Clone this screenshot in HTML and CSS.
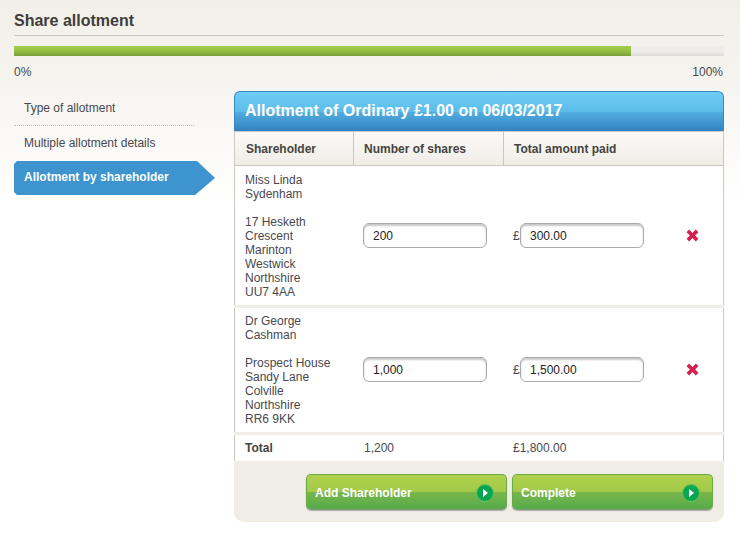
FILE: index.html
```html
<!DOCTYPE html>
<html lang="en">
<head>
<meta charset="utf-8">
<title>Share allotment</title>
<link rel="stylesheet" href="styles.css">
</head>
<body>
<header class="page-head">
  <h1>Share allotment</h1>
</header>
<div class="progress"><div class="progress-fill"></div></div>
<div class="progress-labels"><span>0%</span><span>100%</span></div>
<div class="layout">
  <nav class="steps">
    <a class="step step-dotted">Type of allotment</a>
    <a class="step step-plain">Multiple allotment details</a>
    <a class="step step-active">Allotment by shareholder</a>
  </nav>
  <main class="panel">
    <h2 class="panel-title">Allotment of Ordinary £1.00 on 06/03/2017</h2>
    <div class="head-row">
      <div class="hc hc-name">Shareholder</div>
      <div class="hc hc-shares">Number of shares</div>
      <div class="hc hc-paid">Total amount paid</div>
    </div>
    <div class="rows">
      <div class="row">
        <div class="who">Miss Linda<br>Sydenham<br><br>17 Hesketh<br>Crescent<br>Marinton<br>Westwick<br>Northshire<br>UU7 4AA</div>
        <div class="cell-shares"><input class="field" type="text" value="200"></div>
        <div class="cell-paid"><span class="pound">£</span><input class="field" type="text" value="300.00"></div>
        <div class="cell-del"><svg class="del" viewBox="0 0 14 14" width="13" height="13"><path d="M.6 3.400 3.400 .6 7 4.200 10.600 .6 13.400 3.400 9.800 7 13.400 10.600 10.600 13.400 7 9.800 3.400 13.400 .6 10.600 4.200 7Z"/></svg></div>
      </div>
      <div class="row row-2">
        <div class="who">Dr George<br>Cashman<br><br>Prospect House<br>Sandy Lane<br>Colville<br>Northshire<br>RR6 9KK</div>
        <div class="cell-shares"><input class="field" type="text" value="1,000"></div>
        <div class="cell-paid"><span class="pound">£</span><input class="field" type="text" value="1,500.00"></div>
        <div class="cell-del"><svg class="del" viewBox="0 0 14 14" width="13" height="13"><path d="M.6 3.400 3.400 .6 7 4.200 10.600 .6 13.400 3.400 9.800 7 13.400 10.600 10.600 13.400 7 9.800 3.400 13.400 .6 10.600 4.200 7Z"/></svg></div>
      </div>
      <div class="total-row">
        <div class="total-label">Total</div>
        <div class="total-shares">1,200</div>
        <div class="total-paid">£1,800.00</div>
      </div>
    </div>
    <div class="actions">
      <a class="btn">Add Shareholder<svg class="go" viewBox="0 0 18 18" width="18" height="18"><circle cx="9" cy="9" r="8.500"/><path d="M7 5 12 9 7 13Z"/></svg></a>
      <a class="btn">Complete<svg class="go" viewBox="0 0 18 18" width="18" height="18"><circle cx="9" cy="9" r="8.500"/><path d="M7 5 12 9 7 13Z"/></svg></a>
    </div>
  </main>
</div>
</body>
</html>
```
FILE: styles.css
```css
* { box-sizing: border-box; }
html, body { margin: 0; height: 100%; }
body {
  width: 740px;
  height: 554px;
  overflow: hidden;
  padding: 0 16px 0 14px;
  background: linear-gradient(#f2efe8 0, #f5f3ee 70px, #fff 205px);
  font: 12px/14px "Liberation Sans", Arial, sans-serif;
  color: #48484f;
}
.page-head { height: 36px; border-bottom: 1px solid #cbc8c1; padding-top: 12px; }
h1 { margin: 0; font-size: 16px; line-height: 18px; font-weight: bold; color: #3f3d3a; }
.progress { height: 10px; margin-top: 10px; background: linear-gradient(#efedea 0, #efedea 50%, #dfddd8 100%); }
.progress-fill { width: 617px; height: 10px; background: linear-gradient(#a2cf4c 0, #9ac646 35%, #7ba13b 100%); }
.progress-labels { display: flex; justify-content: space-between; margin-top: 9px; padding-right: 1px; height: 14px; }
.layout { display: flex; margin-top: 12px; align-items: flex-start; }
.steps { width: 220px; flex: none; display: flex; flex-direction: column; }
.step { display: block; width: 180px; padding: 0 10px; }
.step-dotted { height: 35px; padding-top: 10px; border-bottom: 1px dotted #c4c2bc; }
.step-plain { height: 35px; padding-top: 10px; }
.step-active {
  width: 201px;
  height: 34px;
  padding-top: 9px;
  background: #3d94cf;
  color: #fff;
  font-weight: bold;
  clip-path: polygon(0 3px, 3px 0, 183px 0, 201px 17px, 181px 34px, 3px 34px, 0 31px);
}
.panel { width: 490px; flex: none; }
.panel-title {
  margin: 0;
  height: 40px;
  padding: 9px 10px 0;
  border: 1px solid #3a86c2;
  border-bottom: 0;
  border-radius: 6px 6px 0 0;
  background: linear-gradient(#6fcdf7 0, #5cbdea 50%, #52aee0 50%, #3283c2 100%);
  color: #fff;
  font-size: 16px;
  line-height: 20px;
  font-weight: bold;
}
.head-row {
  display: flex;
  height: 35px;
  border: 1px solid #cbc8c1;
  background: linear-gradient(#fbfaf8, #f0ede7);
  font-weight: bold;
  color: #46443f;
}
.hc { padding-top: 10px; padding-left: 11px; }
.hc-name { width: 119px; border-right: 1px solid #cbc8c1; }
.hc-shares { width: 150px; padding-left: 10px; border-right: 1px solid #cbc8c1; }
.hc-paid { padding-left: 10px; }
.rows { display: flex; flex-direction: column; background: #f0ede6; }
.row {
  display: flex;
  align-items: center;
  height: 139px;
  border-left: 1px solid #cbc8c1;
  border-right: 1px solid #cbc8c1;
  background: #fff;
}
.row-2 { height: 124px; margin-top: 3px; }
.row-2 .cell-shares, .row-2 .cell-paid, .row-2 .cell-del { margin-bottom: 1px; }
.who { width: 119px; flex: none; padding-left: 10px; }
.cell-shares { width: 150px; flex: none; padding-left: 9px; }
.cell-paid { width: 167px; flex: none; display: flex; align-items: center; padding-left: 9px; }
.pound { width: 7px; }
.cell-del { display: flex; align-items: center; padding-left: 15px; padding-bottom: 1px; }
.del { fill: #d4204f; display: block; }
.field {
  display: block;
  width: 124px;
  height: 25px;
  margin: 0;
  padding: 1px 9px 0;
  border: 1px solid #aaa;
  border-radius: 6px;
  box-shadow: inset 0 2px 2px #c8c8c8;
  background: #fff;
  font: 12px "Liberation Sans", Arial, sans-serif;
  color: #222;
  outline: 0;
}
.total-row {
  display: flex;
  height: 26px;
  margin-top: 3px;
  padding-top: 6px;
  border-left: 1px solid #cbc8c1;
  border-right: 1px solid #cbc8c1;
  background: #fff;
}
.total-label { width: 119px; padding-left: 10px; font-weight: bold; color: #46443f; }
.total-shares { width: 150px; padding-left: 10px; }
.total-paid { padding-left: 9px; }
.actions {
  display: flex;
  justify-content: flex-end;
  gap: 5px;
  height: 61px;
  padding: 13px 11px 0 0;
  background: #f0ede6;
  border-radius: 0 0 10px 10px;
}
.btn {
  display: flex;
  align-items: center;
  justify-content: space-between;
  width: 201px;
  height: 36px;
  padding: 1px 12px 0 8px;
  border: 1px solid #6bab45;
  border-bottom-color: #7f9c75;
  border-radius: 5px;
  background: linear-gradient(#aed14b 0, #a2ca49 50%, #7ab64a 50%, #55ab4c 100%);
  color: #fff;
  font-weight: bold;
  box-shadow: 0 1px 1px #aaa;
}
.go { display: block; }
.go circle { fill: #0aa551; stroke: #6cc25b; stroke-width: 1; }
.go path { fill: #fff; }
```
